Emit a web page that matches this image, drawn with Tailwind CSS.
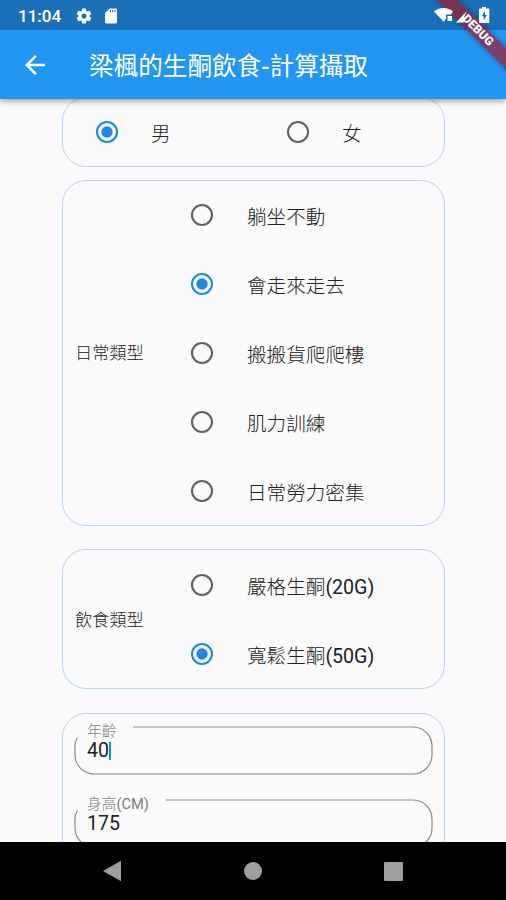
<!DOCTYPE html>
<html lang="zh-Hant">
<head>
    <meta charset="UTF-8">
    <meta name="viewport" content="width=device-width, initial-scale=1.0">
    <title>梁楓的生酮飲食-計算攝取</title>
    <script src="https://cdn.jsdelivr.net/npm/@tailwindcss/browser@4"></script>
</head>
<body class="bg-[#fafafa] font-['Roboto','Noto_Sans_CJK_TC',sans-serif] text-[#212121]">
    <!-- Radio icons -->
    <svg class="hidden">
        <symbol id="radio-off" viewBox="0 0 24 24">
            <circle cx="12" cy="12" r="10" fill="none" stroke="#616161" stroke-width="2.1"/>
        </symbol>
        <symbol id="radio-on" viewBox="0 0 24 24">
            <circle cx="12" cy="12" r="10" fill="none" stroke="#1e88e5" stroke-width="2.1"/>
            <circle cx="12" cy="12" r="5.7" fill="#1e88e5"/>
        </symbol>
    </svg>

    <div class="relative flex h-[900px] w-[506px] flex-col overflow-hidden">
        <!-- Status bar -->
        <div class="flex h-[30px] shrink-0 items-center bg-[#1a70b8] pl-[18px] text-white">
            <span class="w-[57px] pt-[2px] text-[17px] leading-none font-medium">11:04</span>
            <svg class="mt-[1px] h-[18px] w-[18px]" viewBox="0 0 24 24" fill="currentColor">
                <path d="M19.43 12.98c.04-.32.07-.64.07-.98s-.03-.66-.07-.98l2.11-1.65c.19-.15.24-.42.12-.64l-2-3.46c-.12-.22-.39-.3-.61-.22l-2.49 1c-.52-.4-1.08-.73-1.69-.98l-.38-2.65A.49.49 0 0 0 14 2h-4c-.25 0-.46.18-.49.42l-.38 2.65c-.61.25-1.17.59-1.69.98l-2.49-1c-.23-.09-.49 0-.61.22l-2 3.46c-.13.22-.07.49.12.64l2.11 1.65c-.04.32-.07.65-.07.98s.03.66.07.98l-2.11 1.65c-.19.15-.24.42-.12.64l2 3.46c.12.22.39.3.61.22l2.49-1c.52.4 1.08.73 1.69.98l.38 2.65c.03.24.24.42.49.42h4c.25 0 .46-.18.49-.42l.38-2.65c.61-.25 1.17-.59 1.69-.98l2.49 1c.23.09.49 0 .61-.22l2-3.46c.12-.22.07-.49-.12-.64l-2.11-1.65zM12 15.5c-1.93 0-3.5-1.57-3.5-3.5s1.57-3.5 3.5-3.5 3.5 1.57 3.5 3.5-1.57 3.5-3.5 3.5z"/>
            </svg>
            <svg class="mt-[1px] ml-[9px] h-[18px] w-[18px]" viewBox="0 0 24 24" fill="currentColor">
                <path d="M18 2h-8L4.02 8 4 20c0 1.1.9 2 2 2h12c1.1 0 2-.9 2-2V4c0-1.1-.9-2-2-2zm-6 5h-1.3V4H12v3zm3 0h-1.3V4H15v3zm3 0h-1.3V4H18v3z"/>
            </svg>
            <svg class="z-30 ml-auto h-[30px] w-[80px]" viewBox="0 0 80 30" fill="currentColor">
                <!-- wifi -->
                <path d="M8 11.500C13 6.800 22 6.800 27 11.500L25 14.500H20V18L18 22Z"/>
                <path d="M21.500 16h4.500v5h-4.500z"/>
                <!-- signal -->
                <path d="M30 22.500L41 11L38 17L39 19L37.500 22.500Z"/>
                <!-- battery -->
                <path fill-rule="evenodd" d="M56 7h4v1.500h2.500q.8 0 .8.800V22.300q0 .8-.8.800h-8.700q-.8 0-.8-.800V9.300q0-.8.8-.8h2.200zM59 11l-3.300 5.200h1.900v4.300l3.300-5.500H59z"/>
            </svg>
        </div>

        <!-- App bar -->
        <div class="z-10 flex h-[69px] shrink-0 items-center bg-[#2196f3] pl-[20px] text-white shadow-[0_2px_6px_rgba(0,0,0,0.4)] [clip-path:inset(0_0_-12px_0)]">
            <svg class="h-[30px] w-[30px]" viewBox="0 0 24 24" fill="currentColor">
                <path d="M20 11H7.830l5.590-5.590L12 4l-8 8 8 8 1.410-1.410L7.830 13H20v-2z"/>
            </svg>
            <h1 class="ml-[39px] pt-[5px] text-[24.6px] leading-none font-normal">梁楓的生酮飲食<span class="font-medium">-</span>計算攝取</h1>
        </div>

        <!-- Form -->
        <div class="flex min-h-0 flex-1 flex-col overflow-hidden pr-[61px] pl-[62px] font-light">
            <!-- Gender -->
            <div class="-mt-[2px] flex h-[70px] shrink-0 items-center rounded-[24px] border border-[#b5d3f6] pl-[32px] text-[19.6px]">
                <label class="flex w-[191px] items-center">
                    <svg class="h-6 w-6"><use href="#radio-on"/></svg>
                    <span class="ml-[32px] pt-[6px]">男</span>
                </label>
                <label class="flex items-center">
                    <svg class="h-6 w-6"><use href="#radio-off"/></svg>
                    <span class="ml-[32px] pt-[6px]">女</span>
                </label>
            </div>

            <!-- Activity type -->
            <div class="mt-[13px] flex h-[346px] shrink-0 items-center rounded-[24px] border border-[#b5d3f6] pl-[12px]">
                <div class="w-[115px] pt-[2px] text-[17.2px]">日常類型</div>
                <div class="-mt-[1px] flex flex-col text-[19.6px]">
                    <label class="flex h-[69px] items-center">
                        <svg class="h-6 w-6"><use href="#radio-off"/></svg>
                        <span class="ml-[33px] pt-[7px]">躺坐不動</span>
                    </label>
                    <label class="flex h-[69px] items-center">
                        <svg class="h-6 w-6"><use href="#radio-on"/></svg>
                        <span class="ml-[33px] pt-[7px]">會走來走去</span>
                    </label>
                    <label class="flex h-[69px] items-center">
                        <svg class="h-6 w-6"><use href="#radio-off"/></svg>
                        <span class="ml-[33px] pt-[7px]">搬搬貨爬爬樓</span>
                    </label>
                    <label class="flex h-[69px] items-center">
                        <svg class="h-6 w-6"><use href="#radio-off"/></svg>
                        <span class="ml-[33px] pt-[7px]">肌力訓練</span>
                    </label>
                    <label class="flex h-[69px] items-center">
                        <svg class="h-6 w-6"><use href="#radio-off"/></svg>
                        <span class="ml-[33px] pt-[7px]">日常勞力密集</span>
                    </label>
                </div>
            </div>

            <!-- Diet type -->
            <div class="mt-[23px] flex h-[140px] shrink-0 items-center rounded-[24px] border border-[#b5d3f6] pl-[12px]">
                <div class="w-[115px] pt-[4px] text-[17.2px]">飲食類型</div>
                <div class="flex flex-col text-[19.6px]">
                    <label class="flex h-[69px] items-center">
                        <svg class="h-6 w-6"><use href="#radio-off"/></svg>
                        <span class="ml-[33px] pt-[7px]">嚴格生酮<span class="font-normal">(20G)</span></span>
                    </label>
                    <label class="flex h-[69px] items-center">
                        <svg class="h-6 w-6"><use href="#radio-on"/></svg>
                        <span class="ml-[33px] pt-[7px]">寬鬆生酮<span class="font-normal">(50G)</span></span>
                    </label>
                </div>
            </div>

            <!-- Measurements -->
            <div class="mt-[24px] flex h-[320px] shrink-0 flex-col gap-[24px] rounded-[24px] border border-[#b5d3f6] px-[11px] pt-[12px]">
                <div class="relative h-[49px] shrink-0 pl-[13px]">
                    <svg class="absolute top-0 left-0 h-[49px] w-[359px]" fill="none" stroke="#8c8c8c" stroke-width="1.2">
                        <path d="M59 1H339.500A19 19 0 0 1 358 20V29A19 19 0 0 1 339.500 48H20A19 19 0 0 1 1 29V20Q1 15.500 3.500 11.500"/>
                    </svg>
                    <div class="-mt-[4px] text-[14.7px] leading-[18px] text-[#7d7d7d]">年齡</div>
                    <div class="mt-[1px] flex items-center text-[19.6px] leading-[20px] font-normal">40<span class="h-[18px] w-[2px] bg-[#1e88e5]"></span></div>
                </div>
                <div class="relative h-[49px] shrink-0 pl-[13px]">
                    <svg class="absolute top-0 left-0 h-[49px] w-[359px]" fill="none" stroke="#8c8c8c" stroke-width="1.2">
                        <path d="M92 1H339.500A19 19 0 0 1 358 20V29A19 19 0 0 1 339.500 48H20A19 19 0 0 1 1 29V20Q1 15.500 3.500 11.500"/>
                    </svg>
                    <div class="-mt-[4px] text-[14.7px] leading-[18px] text-[#7d7d7d]">身高<span class="font-normal">(CM)</span></div>
                    <div class="mt-[1px] text-[19.6px] leading-[20px] font-normal">175</div>
                </div>
            </div>
        </div>

        <!-- Navigation bar -->
        <div class="flex h-[58px] shrink-0 items-center justify-between bg-black pr-[103px] pl-[102px]">
            <svg class="h-[22px] w-[20px]" viewBox="0 0 20 22" fill="#9e9e9e"><path d="M1 11L19 .8V21.200Z"/></svg>
            <div class="h-[18px] w-[18px] rounded-full bg-[#9e9e9e]"></div>
            <div class="h-[19px] w-[19px] rounded-[1px] bg-[#9e9e9e]"></div>
        </div>

        <!-- Debug ribbon -->
        <div class="absolute top-[22.5px] right-[-47px] z-20 flex h-[14.5px] w-[150px] rotate-45 items-center justify-center bg-[#a4182a]/70 text-[12px] leading-none font-black text-white shadow-[0_0_5px_rgba(0,0,0,0.4)]">DEBUG</div>
    </div>
</body>
</html>
